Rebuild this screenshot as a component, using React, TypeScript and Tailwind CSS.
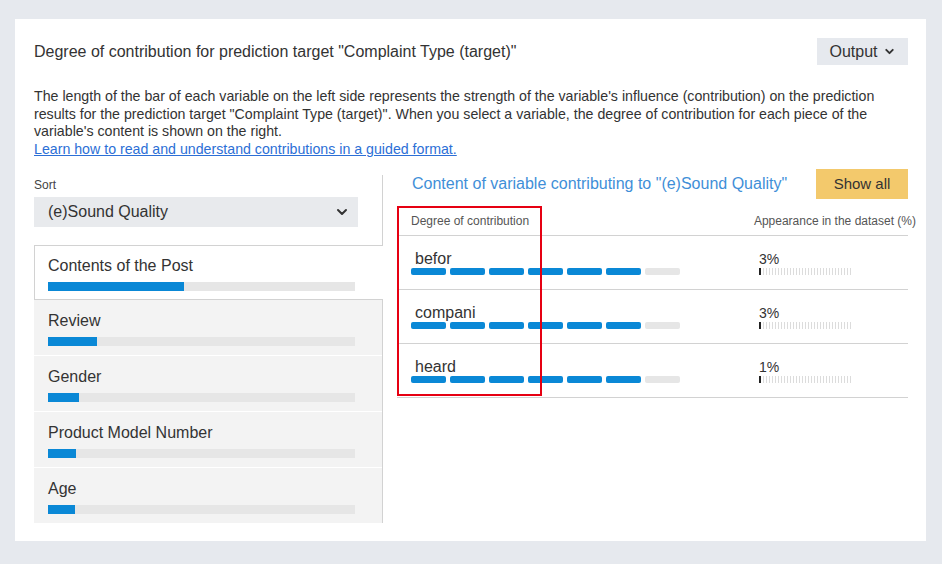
import { ChevronDown } from "lucide-react";

type Variable = {
    name: string;
    width: number;
};

type Word = {
    word: string;
    filled: number;
    percent: string;
};

const variables: Variable[] = [
    { name: "Review", width: 49 },
    { name: "Gender", width: 31 },
    { name: "Product Model Number", width: 28 },
    { name: "Age", width: 27 },
];

const words: Word[] = [
    { word: "befor", filled: 6, percent: "3%" },
    { word: "compani", filled: 6, percent: "3%" },
    { word: "heard", filled: 6, percent: "1%" },
];

function ContributionBar({ width }: { width: number }) {
    return (
        <div className="mt-[6px] h-[9px] w-[307px] bg-[#e6e6e6]">
            <div className="h-full bg-[#0a88d6]" style={{ width: `${width}px` }} />
        </div>
    );
}

function SegmentBar({ filled }: { filled: number }) {
    return (
        <div className="flex gap-[4px]">
            {Array.from({ length: 7 }).map((_, i) => (
                <div
                    key={i}
                    className={i < filled ? "h-[7px] w-[35px] rounded-[2px] bg-[#0a88d6]" : "h-[7px] w-[35px] rounded-[2px] bg-[#e6e6e6]"}
                />
            ))}
        </div>
    );
}

function TickBar() {
    return (
        <svg width="93" height="7" viewBox="0 0 93 7">
            <rect x="0" y="0" width="2" height="7" fill="#222" />
            {Array.from({ length: 30 }).map((_, i) => (
                <rect key={i} x={4 + i * 3} y="0" width="1" height="7" fill="#dcdcdc" />
            ))}
        </svg>
    );
}

export default function App() {
    return (
        <div className="min-h-[564px] bg-[#e6e9ee] pt-[19px] pl-[15px] pr-[16px] pb-[23px] font-['Liberation_Sans',Arial,sans-serif] text-[#333]">
            <div className="h-[522px] w-[911px] bg-white pt-[19px] pl-[19px] pr-[18px]">
                <div className="flex items-center justify-between">
                    <h1 className="text-[16px] leading-[20px]">Degree of contribution for prediction target "Complaint Type (target)"</h1>
                    <button className="flex h-[27px] w-[91px] items-center justify-center gap-[5px] bg-[#e6e9ee] text-[16px]">
                        Output
                        <ChevronDown size={13} strokeWidth={3.5} />
                    </button>
                </div>

                <p className="mt-[23px] text-[14.2px] leading-[17.5px]">
                    The length of the bar of each variable on the left side represents the strength of the variable's influence (contribution) on the prediction
                    <br />
                    results for the prediction target "Complaint Type (target)". When you select a variable, the degree of contribution for each piece of the
                    <br />
                    variable's content is shown on the right.
                    <br />
                    <a href="#" className="text-[#2c6fd6] underline">Learn how to read and understand contributions in a guided format.</a>
                </p>

                <div className="mt-[11px] flex">
                    {/* left: variable list */}
                    <div className="mt-[6px] flex w-[349px] flex-col">
                        <div className="border-r border-[#d2d2d2] pt-[3px] pb-[18px]">
                            <div className="text-[12px] leading-[15px] text-[#444]">Sort</div>
                            <div className="mt-[4px] flex h-[30px] w-[324px] items-center justify-between bg-[#e8eaed] pl-[14px] pr-[8px]">
                                <span className="text-[16px]">(e)Sound Quality</span>
                                <ChevronDown size={16} strokeWidth={3} />
                            </div>
                        </div>

                        <div className="h-[55px] border-y border-l border-[#d2d2d2] bg-white pt-[10px] pl-[13px]">
                            <div className="text-[16px] leading-[20px]">Contents of the Post</div>
                            <ContributionBar width={136} />
                        </div>

                        <div className="flex flex-col gap-[1px] border-r border-[#d2d2d2]">
                            {variables.map((v) => (
                                <div key={v.name} className="h-[55px] bg-[#f3f3f3] pt-[11px] pl-[14px]">
                                    <div className="text-[16px] leading-[20px]">{v.name}</div>
                                    <ContributionBar width={v.width} />
                                </div>
                            ))}
                        </div>
                    </div>

                    {/* right: content of variable */}
                    <div className="relative flex-1 pl-[14px]">
                        <div className="flex h-[30px] items-center justify-between">
                            <span className="pl-[15px] text-[16px] text-[#3f8fd8]">Content of variable contributing to "(e)Sound Quality"</span>
                            <button className="h-[30px] w-[92px] bg-[#f3c96c] text-[15px]">Show all</button>
                        </div>

                        <div className="mt-[7px] flex h-[30px] items-center justify-between border-b border-[#d2d2d2] pl-[14px] text-[12px] text-[#555]">
                            <span>Degree of contribution</span>
                            <span className="-mr-[8px]">Appearance in the dataset (%)</span>
                        </div>

                        {words.map((w) => (
                            <div key={w.word} className="flex h-[54px] border-b border-[#d2d2d2] pt-[14px]">
                                <div className="w-[362px] pl-[14px]">
                                    <div className="pl-[4px] text-[16px] leading-[18px]">{w.word}</div>
                                    <SegmentBar filled={w.filled} />
                                </div>
                                <div>
                                    <div className="text-[14px] leading-[18px]">{w.percent}</div>
                                    <TickBar />
                                </div>
                            </div>
                        ))}

                        <div className="absolute left-[14px] top-[37px] h-[190px] w-[145px] border-2 border-[#e60012]" />
                    </div>
                </div>
            </div>
        </div>
    );
}
